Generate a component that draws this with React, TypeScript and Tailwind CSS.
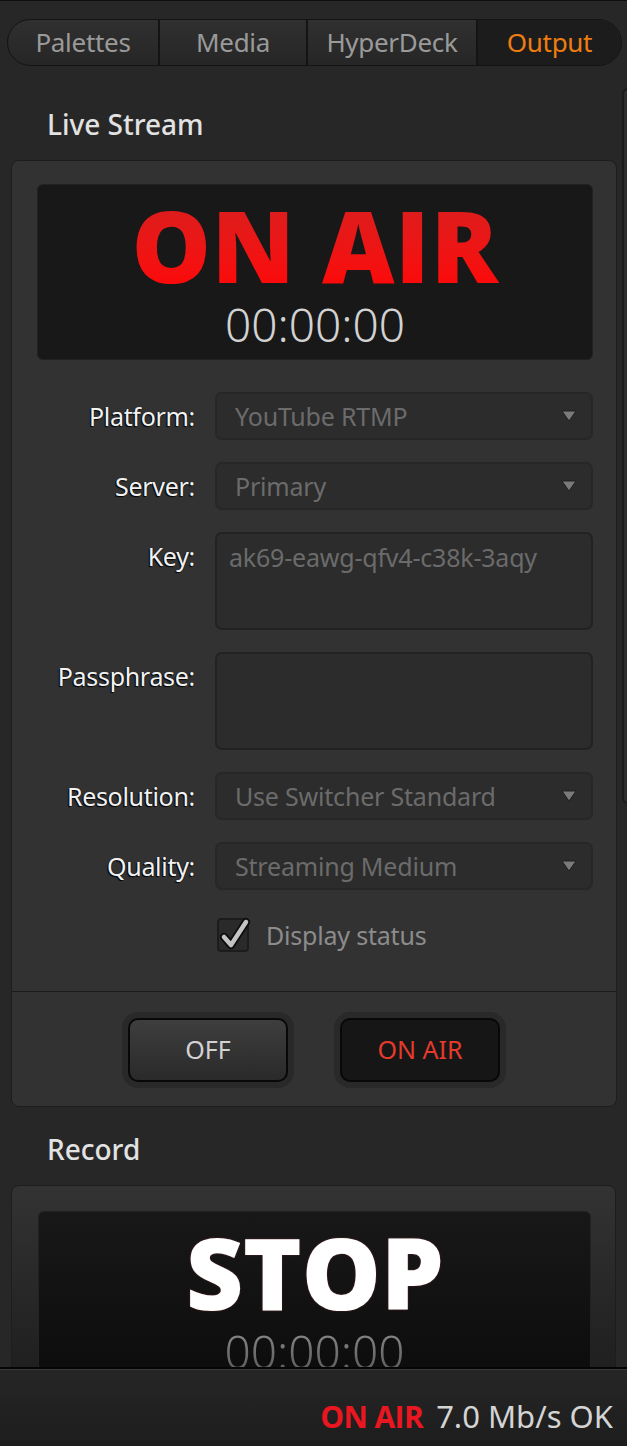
import React from "react";

const labelCls =
  "text-right text-[25px] leading-[48px] text-[#f2f2f2] [text-shadow:-1px_1px_1px_#000,1px_0_0_#222] tracking-[-0.3px]";

function Arrow() {
  return (
    <svg width="16" height="12" viewBox="0 0 16 12" className="shrink-0">
      <polygon points="1,1 15,1 8,11" fill="#7a7a7a" stroke="#1f1f1f" strokeWidth="1" strokeLinejoin="round" />
    </svg>
  );
}

function Select({ value }: { value: string }) {
  return (
    <div className="h-[48px] rounded-[7px] border-2 border-[#272727] bg-[#2c2c2c] flex items-center pl-[18px] pr-[14px]">
      <span className="flex-1 text-[25px] leading-[44px] text-[#6b6b6b] tracking-[-0.2px]">{value}</span>
      <Arrow />
    </div>
  );
}

function TextBox({ value }: { value?: string }) {
  return (
    <div className="h-[98px] rounded-[7px] border-2 border-[#222] bg-[#2c2c2c] pl-[12px] pt-[1px]">
      <span className="text-[25px] leading-[44px] text-[#6b6b6b] tracking-[-0.2px]">{value}</span>
    </div>
  );
}

function Display({ title, red }: { title: string; red?: boolean }) {
  return (
    <div
      className={
        "h-[176px] rounded-[6px] border border-[#222] flex flex-col items-center pt-[9px] " +
        (red ? "bg-[#181818]" : "bg-gradient-to-b from-[#181818] to-[#0c0c0c]")
      }
    >
      <div
        className={
          "font-['Open_Sans'] font-extrabold text-[100px] leading-[100px] h-[100px] " +
          (red
            ? "tracking-[0.5px] bg-gradient-to-b from-[#d81e1e] to-[#ff0505] bg-clip-text text-transparent"
            : "tracking-[-0.5px] text-white [text-shadow:0_0_2px_rgba(255,80,80,0.35)]")
        }
      >
        {title}
      </div>
      <div
        className={
          "mt-[7px] text-[46px] leading-[46px] font-light " +
          (red ? "text-[#d2d2d2]" : "bg-gradient-to-b from-[#8a8a8a] to-[#5a5a5a] bg-clip-text text-transparent")
        }
      >
        00:00:00
      </div>
    </div>
  );
}

export default function App() {
  return (
    <div className="relative w-[627px] h-[1446px] flex flex-col bg-[#272727] overflow-hidden font-['Noto_Sans',sans-serif]">
      <div className="flex-1 overflow-hidden border-t border-[#0e0e0e] min-h-0">
        {/* Tabs */}
        <div className="mt-[18px] ml-[7px] w-[615px] h-[47px] flex rounded-full border border-[#131313] overflow-hidden bg-gradient-to-b from-[#303030] to-[#262626] text-[26px] text-[#9a9a9a] tracking-[-0.3px]">
          <div className="w-[150px] flex items-center justify-center">Palettes</div>
          <div className="w-[148px] flex items-center justify-center border-l-2 border-[#141414]">Media</div>
          <div className="w-[170px] flex items-center justify-center border-l-2 border-[#141414]">HyperDeck</div>
          <div className="flex-1 flex items-center justify-center border-l-2 border-[#141414] bg-[#1c1c1c] text-[#ee7c12]">
            Output
          </div>
        </div>

        {/* Live Stream */}
        <div className="mt-[41px] pl-[47px] h-[34px] text-[28px] leading-[34px] font-medium text-[#e2e2e2]">Live Stream</div>
        <div className="mt-[19px] ml-[11px] mr-[10px] rounded-[8px] border border-[#1d1d1d] bg-[#323232]">
          <div className="pt-[23px] pl-[25px] pr-[23px] pb-[39px]">
            <Display title="ON AIR" red />
            <div className="mt-[32px] grid grid-cols-[158px_1fr] gap-x-[20px] gap-y-[22px]">
              <div className={labelCls}>Platform:</div>
              <Select value="YouTube RTMP" />
              <div className={labelCls}>Server:</div>
              <Select value="Primary" />
              <div className={labelCls}>Key:</div>
              <TextBox value="ak69-eawg-qfv4-c38k-3aqy" />
              <div className={labelCls}>Passphrase:</div>
              <TextBox />
              <div className={labelCls}>Resolution:</div>
              <Select value="Use Switcher Standard" />
              <div className={labelCls}>Quality:</div>
              <Select value="Streaming Medium" />
              <div />
              <div className="mt-[6px] flex items-center gap-[17px] pl-[2px]">
                <div className="relative w-[32px] h-[34px] rounded-[4px] border-2 border-[#1c1c1c] bg-[#2a2a2a]">
                  <svg className="absolute -left-[1px] -top-[4px] overflow-visible" width="34" height="36" viewBox="0 0 34 36">
                    <path d="M6 21 L13 29 L28 6" fill="none" stroke="#0c0c0c" strokeWidth="8" strokeLinecap="round" strokeLinejoin="round" />
                    <path d="M6 21 L13 29 L28 6" fill="none" stroke="#c4c4c4" strokeWidth="4.5" strokeLinecap="round" strokeLinejoin="round" />
                  </svg>
                </div>
                <span className="text-[25px] leading-[34px] text-[#8c8c8c] tracking-[-0.2px]">Display status</span>
              </div>
            </div>
          </div>
          <div className="border-t border-[#1c1c1c] pt-[20px] pb-[18px] flex justify-center gap-[40px]">
            <div className="w-[172px] h-[76px] rounded-[16px] bg-[#292929] p-[6px]">
              <div className="w-full h-full rounded-[10px] border-2 border-[#080808] bg-gradient-to-b from-[#3e3e3e] to-[#2a2a2a] flex items-center justify-center text-[25px] text-[#d2d2d2]">
                OFF
              </div>
            </div>
            <div className="w-[172px] h-[76px] rounded-[16px] bg-[#292929] p-[6px]">
              <div className="w-full h-full rounded-[10px] border-2 border-[#080808] bg-[#161616] flex items-center justify-center text-[25px] text-[#e53a2c]">
                ON AIR
              </div>
            </div>
          </div>
        </div>

        {/* Record */}
        <div className="mt-[25px] pl-[47px] h-[34px] text-[28px] leading-[34px] font-medium text-[#e2e2e2]">Record</div>
        <div className="mt-[19px] ml-[11px] mr-[11px] h-[220px] rounded-[8px] border border-[#1d1d1d] bg-gradient-to-b from-[#333333] to-[#1c1c1c]">
          <div className="pt-[25px] pl-[26px] pr-[24px]">
            <Display title="STOP" />
          </div>
        </div>
      </div>

      {/* Footer */}
      <div className="h-[79px] shrink-0 border-t-2 border-[#050505] bg-gradient-to-b from-[#262626] to-[#1d1d1d]">
        <div className="h-[1px] bg-[#3a3a3a]" />
        <div className="pt-[31px] pr-[14px] flex justify-end items-baseline gap-[13px] text-[31px] leading-none">
          <span className="font-['Open_Sans'] font-bold text-[#ea1620] tracking-[-0.6px] text-[30px]">ON AIR</span>
          <span className="text-[#d4d4d4]">7.0 Mb/s OK</span>
        </div>
      </div>

      {/* scrollbar */}
      <div className="absolute left-[622px] top-[88px] w-[12px] h-[716px] rounded-[6px] border-2 border-[#1b1b1b] bg-[#2e2e2e]" />
    </div>
  );
}
